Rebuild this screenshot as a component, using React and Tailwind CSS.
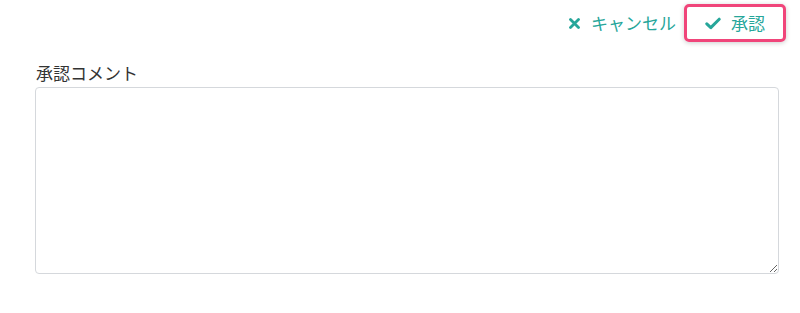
import React, { useState } from "react";

const App = () => {
  const [comment, setComment] = useState("");

  return (
    <div
      className="w-[800px] h-[313px] bg-white"
      style={{ fontFamily: '"Noto Sans CJK JP", "Noto Sans", sans-serif' }}
    >
      <div className="flex justify-end items-center pt-[4px] pr-[14px] gap-[8px]">
        <button className="flex items-center gap-[11px] h-[38px] text-[17px] text-[#26a69a]">
          <svg width="11" height="11" viewBox="0 0 11 11">
            <path d="M1.5 1.5 L9.5 9.5 M9.5 1.5 L1.5 9.5" stroke="#26a69a" strokeWidth="2.8" strokeLinecap="round" />
          </svg>
          <span>キャンセル</span>
        </button>
        <button className="flex items-center gap-[10px] h-[38px] w-[102px] pl-[18px] text-[17px] text-[#26a69a] border-[3px] border-[#f0457a] rounded-[5px] shadow-[0_1px_5px_rgba(0,0,0,0.2)]">
          <svg width="16" height="13" viewBox="0 0 16 13">
            <path d="M1.8 6.8 L5.8 10.6 L14.2 2.2" fill="none" stroke="#26a69a" strokeWidth="3" strokeLinecap="round" strokeLinejoin="round" />
          </svg>
          <span>承認</span>
        </button>
      </div>
      <div className="px-[35px] pt-[18px]">
        <label className="block text-[17px] leading-[25px] text-[#333] pl-[1px]">承認コメント</label>
        <textarea
          value={comment}
          onChange={(e) => setComment(e.target.value)}
          className="block mt-[2px] w-[744px] h-[187px] border border-[#d5d8dc] rounded-[4px] outline-none p-2 text-[14px]"
        />
      </div>
    </div>
  );
};

export default App;
